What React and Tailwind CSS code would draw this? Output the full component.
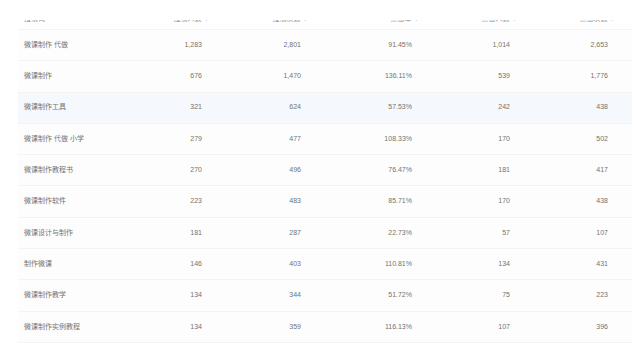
import React from "react";

const rows = [
  ["微课制作 代做", "1,283", "2,801", "91.45%", "1,014", "2,653"],
  ["微课制作", "676", "1,470", "136.11%", "539", "1,776"],
  ["微课制作工具", "321", "624", "57.53%", "242", "438"],
  ["微课制作 代做 小学", "279", "477", "108.33%", "170", "502"],
  ["微课制作教程书", "270", "496", "76.47%", "181", "417"],
  ["微课制作软件", "223", "483", "85.71%", "170", "438"],
  ["微课设计与制作", "181", "287", "22.73%", "57", "107"],
  ["制作微课", "146", "403", "110.81%", "134", "431"],
  ["微课制作教学", "134", "344", "51.72%", "75", "223"],
  ["微课制作实例教程", "134", "359", "116.13%", "107", "396"],
];

const headers = ["搜索人数", "搜索次数", "点击率", "点击人数", "点击次数"];

const grid = "grid grid-cols-[92px_92px_99px_111px_98px_98px_24px]";

export default function App() {
  return (
    <div className="w-[640px] h-[348px] bg-white overflow-hidden font-['Liberation_Sans','Noto_Sans_CJK_SC',sans-serif] text-[7px] text-[#737373]">
      <div className="ml-[18px] w-[614px]">
        <div className={`${grid} h-[30px] bg-white border-b border-[#f3f3f3]`}>
          <div className="pl-[6px] pt-[20px]">
            <div className="h-[2px] overflow-hidden">
              <div className="-mt-[5px] leading-[7px] text-[#8a8a8a]">搜索词</div>
            </div>
          </div>
          {headers.map((h) => (
            <div key={h} className="flex justify-end pt-[20px]">
              <div className="h-[2px] overflow-hidden flex -mr-[6px] gap-[3px]">
                <div className="-mt-[5px] leading-[7px] text-[#8a8a8a]">{h}</div>
                <div className="-mt-[5px] leading-[7px] text-[#c8c8c8]">↕</div>
              </div>
            </div>
          ))}
          <div />
        </div>
        {rows.map((r, i) => (
          <div
            key={i}
            className={`${grid} h-[31.3px] items-center border-b border-[#f3f3f3] ${
              i === 2 ? "bg-[#f5f8fc]" : "bg-[#fdfdfd]"
            }`}
          >
            <div className="pl-[6px] whitespace-nowrap">{r[0]}</div>
            {r.slice(1).map((v, j) => (
              <div key={j} className="text-right">
                {v}
              </div>
            ))}
            <div />
          </div>
        ))}
      </div>
    </div>
  );
}
